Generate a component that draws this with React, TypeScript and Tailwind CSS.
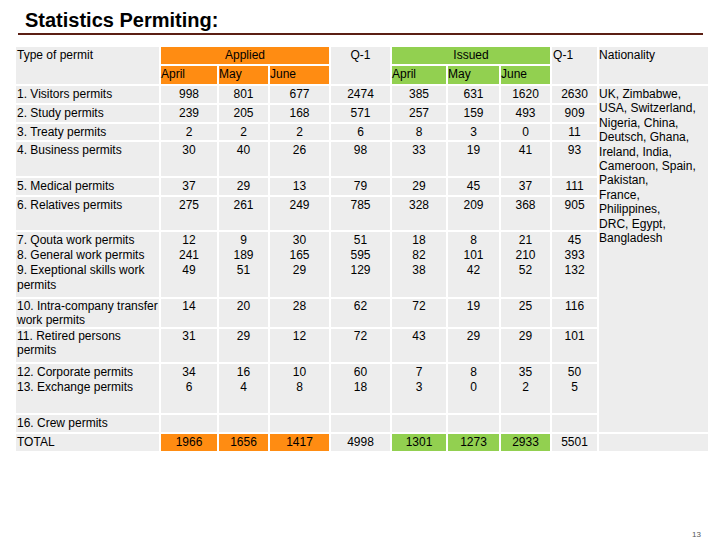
const font = { fontFamily: '"Liberation Sans", Arial, sans-serif' };

type Row = {
  label: string[];
  h: number;
  tight?: boolean;
  applied: string[][];
  q1: string[];
  issued: string[][];
  q1b: string[];
};

const rows: Row[] = [
  { label: ["1. Visitors permits"], h: 19, applied: [["998"], ["801"], ["677"]], q1: ["2474"], issued: [["385"], ["631"], ["1620"]], q1b: ["2630"] },
  { label: ["2. Study permits"], h: 19, applied: [["239"], ["205"], ["168"]], q1: ["571"], issued: [["257"], ["159"], ["493"]], q1b: ["909"] },
  { label: ["3. Treaty permits"], h: 18, applied: [["2"], ["2"], ["2"]], q1: ["6"], issued: [["8"], ["3"], ["0"]], q1b: ["11"] },
  { label: ["4. Business permits"], h: 36, applied: [["30"], ["40"], ["26"]], q1: ["98"], issued: [["33"], ["19"], ["41"]], q1b: ["93"] },
  { label: ["5. Medical permits"], h: 19, applied: [["37"], ["29"], ["13"]], q1: ["79"], issued: [["29"], ["45"], ["37"]], q1b: ["111"] },
  { label: ["6. Relatives permits"], h: 35, applied: [["275"], ["261"], ["249"]], q1: ["785"], issued: [["328"], ["209"], ["368"]], q1b: ["905"] },
  {
    label: ["7. Qouta work permits", "8. General work permits", "9. Exeptional skills work", "permits"],
    h: 67,
    applied: [["12", "241", "49"], ["9", "189", "51"], ["30", "165", "29"]],
    q1: ["51", "595", "129"],
    issued: [["18", "82", "38"], ["8", "101", "42"], ["21", "210", "52"]],
    q1b: ["45", "393", "132"],
  },
  { label: ["10. Intra-company transfer", "work permits"], h: 30, tight: true, applied: [["14"], ["20"], ["28"]], q1: ["62"], issued: [["72"], ["19"], ["25"]], q1b: ["116"] },
  { label: ["11. Retired persons", "permits"], h: 35, tight: true, applied: [["31"], ["29"], ["12"]], q1: ["72"], issued: [["43"], ["29"], ["29"]], q1b: ["101"] },
  { label: ["12. Corporate permits", "13. Exchange permits"], h: 51, applied: [["34", "6"], ["16", "4"], ["10", "8"]], q1: ["60", "18"], issued: [["7", "3"], ["8", "0"], ["35", "2"]], q1b: ["50", "5"] },
  { label: ["16. Crew permits"], h: 19, applied: [[], [], []], q1: [], issued: [[], [], []], q1b: [] },
];

const nationality = [
  "UK, Zimbabwe,",
  "USA, Switzerland,",
  "Nigeria, China,",
  "Deutsch, Ghana,",
  "Ireland, India,",
  "Cameroon, Spain,",
  "Pakistan,",
  "France,",
  "Philippines,",
  "DRC, Egypt,",
  "Bangladesh",
];

function Lines({ items, tight }: { items: string[]; tight?: boolean }) {
  return (
    <div className={tight ? "leading-[14px]" : "leading-[15px]"}>
      {items.map((t, i) => (
        <div key={i}>{t}</div>
      ))}
    </div>
  );
}

const cell = "border-2 border-white align-top px-[1px] whitespace-nowrap";
const gray = "bg-[#ededed]";
const orange = "bg-[#ff8c12]";
const green = "bg-[#92d050]";

export default function App() {
  return (
    <div className="w-[720px] h-[540px] bg-white flex flex-col text-black" style={font}>
      <div className="pl-[25px] pt-[8px] text-[20px] leading-[24px] font-bold">Statistics Permiting:</div>
      <div className="ml-[18px] mt-[1px] w-[685px] h-[2px] bg-[#5b1f14]" />
      <table className="ml-[14px] mt-[10px] w-[694px] table-fixed border-collapse text-[12px] leading-[15px]">
        <colgroup>
          <col className="w-[145px]" />
          <col className="w-[58px]" />
          <col className="w-[51px]" />
          <col className="w-[61px]" />
          <col className="w-[61px]" />
          <col className="w-[56px]" />
          <col className="w-[53px]" />
          <col className="w-[51px]" />
          <col className="w-[47px]" />
          <col className="w-[111px]" />
        </colgroup>
        <tbody>
          <tr className="h-[19px]">
            <td rowSpan={2} className={`${cell} ${gray} pt-[1px]`}>Type of permit</td>
            <td colSpan={3} className={`${cell} ${orange} text-center pt-[1px]`}>Applied</td>
            <td rowSpan={2} className={`${cell} ${gray} text-center pt-[1px]`}>Q-1</td>
            <td colSpan={3} className={`${cell} ${green} text-center pt-[1px]`}>Issued</td>
            <td rowSpan={2} className={`${cell} ${gray} pt-[1px]`}>Q-1</td>
            <td rowSpan={2} className={`${cell} ${gray} pt-[1px] pl-0`}>Nationality</td>
          </tr>
          <tr className="h-[20px]">
            <td className={`${cell} ${orange} pt-[1px] pl-0`}>April</td>
            <td className={`${cell} ${orange} pt-[1px] pl-0`}>May</td>
            <td className={`${cell} ${orange} pt-[1px] pl-0`}>June</td>
            <td className={`${cell} ${green} pt-[1px] pl-0`}>April</td>
            <td className={`${cell} ${green} pt-[1px] pl-0`}>May</td>
            <td className={`${cell} ${green} pt-[1px] pl-0`}>June</td>
          </tr>
          {rows.map((r, i) => {
            const pad = r.tight ? "pt-0" : "pt-[1px]";
            return (
              <tr key={i} style={{ height: r.h }}>
                <td className={`${cell} ${gray} ${pad}`}>
                  <Lines items={r.label} tight={r.tight} />
                </td>
                {r.applied.map((c, j) => (
                  <td key={`a${j}`} className={`${cell} ${gray} ${pad} text-center`}>
                    <Lines items={c} tight={r.tight} />
                  </td>
                ))}
                <td className={`${cell} ${gray} ${pad} text-center`}>
                  <Lines items={r.q1} tight={r.tight} />
                </td>
                {r.issued.map((c, j) => (
                  <td key={`i${j}`} className={`${cell} ${gray} ${pad} text-center`}>
                    <Lines items={c} tight={r.tight} />
                  </td>
                ))}
                <td className={`${cell} ${gray} ${pad} text-center`}>
                  <Lines items={r.q1b} tight={r.tight} />
                </td>
                {i === 0 && (
                  <td rowSpan={rows.length} className={`${cell} ${gray} pt-[1px] pl-0`}>
                    <div className="leading-[14.4px]">
                      {nationality.map((t) => (
                        <div key={t}>{t}</div>
                      ))}
                    </div>
                  </td>
                )}
              </tr>
            );
          })}
          <tr className="h-[19px]">
            <td className={`${cell} ${gray} pt-[1px]`}>TOTAL</td>
            <td className={`${cell} ${orange} pt-[1px] text-center`}>1966</td>
            <td className={`${cell} ${orange} pt-[1px] text-center`}>1656</td>
            <td className={`${cell} ${orange} pt-[1px] text-center`}>1417</td>
            <td className={`${cell} ${gray} pt-[1px] text-center`}>4998</td>
            <td className={`${cell} ${green} pt-[1px] text-center`}>1301</td>
            <td className={`${cell} ${green} pt-[1px] text-center`}>1273</td>
            <td className={`${cell} ${green} pt-[1px] text-center`}>2933</td>
            <td className={`${cell} ${gray} pt-[1px] text-center`}>5501</td>
            <td className={`${cell} ${gray}`}></td>
          </tr>
        </tbody>
      </table>
      <div className="mt-auto flex justify-end pr-[19px] pb-0 text-[8px] leading-[10px] text-[#555]">13</div>
    </div>
  );
}
